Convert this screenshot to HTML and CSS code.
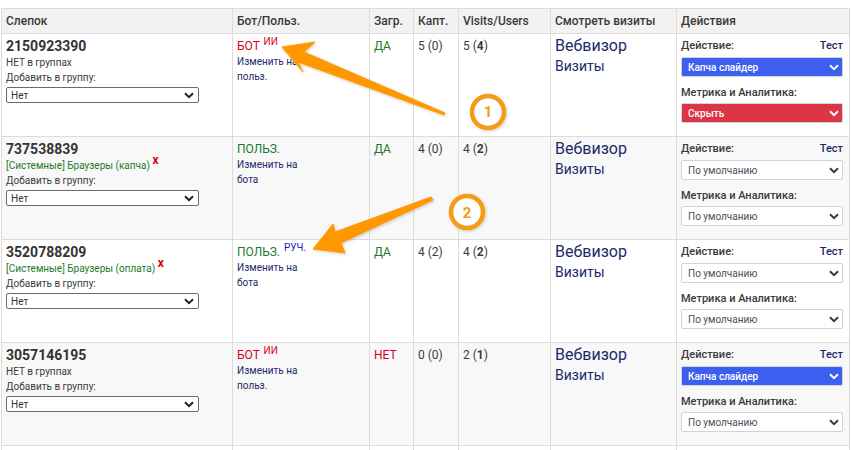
FILE: index.html
```html
<!DOCTYPE html>
<html lang="ru">
<head>
  <meta charset="UTF-8" />
  <title>Визиты</title>
  <link rel="stylesheet" href="styles.css">
</head>
<body>
  <div class="page">
    <table class="visits">
      <colgroup>
        <col class="c-print"><col class="c-type"><col class="c-load"><col class="c-capt"><col class="c-visits"><col class="c-view"><col class="c-act">
      </colgroup>
      <thead>
        <tr>
          <th>Слепок</th><th>Бот/Польз.</th><th>Загр.</th><th>Капт.</th><th>Visits/Users</th><th>Смотреть визиты</th><th>Действия</th>
        </tr>
      </thead>
      <tbody>
        <tr>
          <td>
            <div class="fp">2150923390</div>
            <div class="group">НЕТ в группах</div>
            <div class="add">Добавить в группу:</div>
            <select class="group-select"><option>Нет</option></select>
          </td>
          <td>
            <div class="kind"><span class="red">БОТ</span> <sup class="red">ИИ</sup></div>
            <a class="switch">Изменить на польз.</a>
          </td>
          <td class="num green">ДА</td>
          <td class="num">5 (0)</td>
          <td class="num">5 (<b>4</b>)</td>
          <td><a class="web">Вебвизор</a><a class="vis">Визиты</a></td>
          <td>
            <div class="act-head"><b>Действие:</b><a>Тест</a></div>
            <select class="act blue"><option>Капча слайдер</option></select>
            <div class="act-head second"><b>Метрика и Аналитика:</b></div>
            <select class="act crimson"><option>Скрыть</option></select>
          </td>
        </tr>
        <tr>
          <td>
            <div class="fp">737538839</div>
            <div class="group green">[Системные] Браузеры (капча) <sup class="del">x</sup></div>
            <div class="add">Добавить в группу:</div>
            <select class="group-select"><option>Нет</option></select>
          </td>
          <td>
            <div class="kind"><span class="green">ПОЛЬЗ.</span></div>
            <a class="switch">Изменить на бота</a>
          </td>
          <td class="num green">ДА</td>
          <td class="num">4 (0)</td>
          <td class="num">4 (<b>2</b>)</td>
          <td><a class="web">Вебвизор</a><a class="vis">Визиты</a></td>
          <td>
            <div class="act-head"><b>Действие:</b><a>Тест</a></div>
            <select class="act"><option>По умолчанию</option></select>
            <div class="act-head second"><b>Метрика и Аналитика:</b></div>
            <select class="act"><option>По умолчанию</option></select>
          </td>
        </tr>
        <tr>
          <td>
            <div class="fp">3520788209</div>
            <div class="group green">[Системные] Браузеры (оплата) <sup class="del">x</sup></div>
            <div class="add">Добавить в группу:</div>
            <select class="group-select"><option>Нет</option></select>
          </td>
          <td>
            <div class="kind"><span class="green">ПОЛЬЗ.</span> <sup class="navy">РУЧ.</sup></div>
            <a class="switch">Изменить на бота</a>
          </td>
          <td class="num green">ДА</td>
          <td class="num">4 (2)</td>
          <td class="num">4 (<b>2</b>)</td>
          <td><a class="web">Вебвизор</a><a class="vis">Визиты</a></td>
          <td>
            <div class="act-head"><b>Действие:</b><a>Тест</a></div>
            <select class="act"><option>По умолчанию</option></select>
            <div class="act-head second"><b>Метрика и Аналитика:</b></div>
            <select class="act"><option>По умолчанию</option></select>
          </td>
        </tr>
        <tr>
          <td>
            <div class="fp">3057146195</div>
            <div class="group">НЕТ в группах</div>
            <div class="add">Добавить в группу:</div>
            <select class="group-select"><option>Нет</option></select>
          </td>
          <td>
            <div class="kind"><span class="red">БОТ</span> <sup class="red">ИИ</sup></div>
            <a class="switch">Изменить на польз.</a>
          </td>
          <td class="num red">НЕТ</td>
          <td class="num">0 (0)</td>
          <td class="num">2 (<b>1</b>)</td>
          <td><a class="web">Вебвизор</a><a class="vis">Визиты</a></td>
          <td>
            <div class="act-head"><b>Действие:</b><a>Тест</a></div>
            <select class="act blue"><option>Капча слайдер</option></select>
            <div class="act-head second"><b>Метрика и Аналитика:</b></div>
            <select class="act"><option>По умолчанию</option></select>
          </td>
        </tr>
        <tr class="empty"><td></td><td></td><td></td><td></td><td></td><td></td><td></td></tr>
      </tbody>
    </table>

    <!-- callouts drawn over the table -->
    <svg class="callouts" width="852" height="450" viewBox="0 0 852 450" aria-hidden="true">
      <defs>
        <filter id="soft" x="-10%" y="-10%" width="120%" height="120%">
          <feDropShadow dx="1" dy="1" stdDeviation="1.5" flood-color="#000" flood-opacity="0.2"/>
        </filter>
      </defs>
      <g filter="url(#soft)" fill="#ff9800" stroke="#ff9800" stroke-linejoin="round">
        <polygon points="282,47 315,42 304,52 445,113 444,115 298,62 303,72" stroke-width="1"/>
        <polygon points="313,249 333,224 335,232 431,197 433,200 341,243 345,253" stroke-width="1"/>
      </g>
      <g filter="url(#soft)">
        <circle cx="488" cy="112" r="16" fill="#fff" stroke="#f39c12" stroke-width="4.5"/>
        <circle cx="467" cy="212" r="16" fill="#fff" stroke="#f39c12" stroke-width="4.5"/>
      </g>
      <text class="callout-num" x="488" y="117">1</text>
      <text class="callout-num" x="467" y="218">2</text>
    </svg>
  </div>
</body>
</html>
```

FILE: styles.css
```css
html, body {
  margin: 0;
  height: 450px;
  overflow: hidden;
  background: #fff;
}
body {
  font-family: Roboto, sans-serif;
  font-size: 10px;
  color: #3a3a3a;
}
.page {
  position: relative;
  padding: 8px 0 0 1px;
  height: 442px;
  overflow: hidden;
}
.visits {
  table-layout: fixed;
  border-collapse: collapse;
  width: 848px;
}
.c-print { width: 231px; }
.c-type { width: 137px; }
.c-load { width: 44px; }
.c-capt { width: 45px; }
.c-visits { width: 92px; }
.c-view { width: 126px; }
.c-act { width: 173px; }
.visits th, .visits td {
  border: 1px solid #dcdcdc;
  vertical-align: top;
  padding: 0 4px;
}
.visits th {
  height: 24px;
  background: #f2f2f2;
  text-align: left;
  vertical-align: middle;
  font-size: 12px;
  font-weight: 500;
  color: #3a3a3a;
  white-space: nowrap;
}
.visits td { height: 102px; }
.visits tbody tr:nth-child(even) td { background: #f8f8f8; }
.visits .empty td { height: 20px; }
.fp {
  margin-top: 3px;
  font-size: 14px;
  font-weight: 700;
  line-height: 18px;
  color: #333;
}
.group {
  margin-top: 1px;
  line-height: 14px;
  white-space: nowrap;
}
.add {
  line-height: 15px;
}
.group-select {
  display: block;
  appearance: none;
  width: 193px;
  height: 16px;
  margin-top: 2px;
  padding: 0 0 0 4px;
  border: 1px solid #6b6b6b;
  border-radius: 2px;
  background: #fff url("data:image/svg+xml,%3Csvg xmlns='http://www.w3.org/2000/svg' width='10' height='7'%3E%3Cpath d='M1 1.2 5 5.2 9 1.2' fill='none' stroke='%23222' stroke-width='2'/%3E%3C/svg%3E") no-repeat right 4px center;
  font-family: Roboto, sans-serif;
  font-size: 10px;
  color: #333;
}
.kind {
  margin-top: 2px;
  font-size: 12px;
  line-height: 20px;
  white-space: nowrap;
}
.kind sup {
  font-size: 10px;
  line-height: 0;
  vertical-align: 5px;
  margin-left: 1px;
}
.switch {
  display: block;
  width: 70px;
  margin-top: -2px;
  line-height: 15px;
  color: #1c2a6b;
}
.red { color: #d0021b; }
.green { color: #1a7a2c; }
.navy { color: #1a1ac0; }
.del {
  color: #e00000;
  font-size: 12px;
  font-weight: 700;
  line-height: 0;
  vertical-align: 5px;
}
.num {
  font-size: 12px;
  line-height: 20px;
}
.visits td.num { padding-top: 2px; height: 100px; }
.num b { font-weight: 700; }
.web, .vis {
  display: block;
  color: #1c2a6b;
}
.web {
  margin-top: 2px;
  font-size: 16px;
  line-height: 20px;
}
.vis {
  font-size: 14px;
  line-height: 20px;
}
.act-head {
  display: flex;
  justify-content: space-between;
  width: 162px;
  margin-top: 5px;
  font-size: 11px;
  line-height: 14px;
}
.act-head b { font-weight: 500; color: #3a3a3a; }
.act-head a { font-weight: 500; color: #1c2a6b; }
.act-head.second { margin: 9px 0 -1px; }
.act {
  display: block;
  appearance: none;
  width: 162px;
  height: 20px;
  margin-top: 4px;
  padding: 0 0 0 6px;
  border: 1px solid #ced4da;
  border-radius: 2px;
  background: #fff url("data:image/svg+xml,%3Csvg xmlns='http://www.w3.org/2000/svg' width='10' height='7'%3E%3Cpath d='M1 1.2 5 5.2 9 1.2' fill='none' stroke='%23343a40' stroke-width='2'/%3E%3C/svg%3E") no-repeat right 3px center;
  font-family: Roboto, sans-serif;
  font-size: 10px;
  color: #495057;
}
.act.blue, .act.crimson {
  color: #fff;
  font-weight: 500;
  background-image: url("data:image/svg+xml,%3Csvg xmlns='http://www.w3.org/2000/svg' width='10' height='7'%3E%3Cpath d='M1 1.2 5 5.2 9 1.2' fill='none' stroke='%23fff' stroke-width='2'/%3E%3C/svg%3E");
}
.act.blue { background-color: #3d5ff0; }
.act.crimson { background-color: #dc3545; }
.callouts {
  position: absolute;
  top: 0;
  left: 0;
  pointer-events: none;
}
.callout-num {
  font-family: Roboto, sans-serif;
  font-size: 15px;
  font-weight: 700;
  fill: #f39c12;
  text-anchor: middle;
}
```
